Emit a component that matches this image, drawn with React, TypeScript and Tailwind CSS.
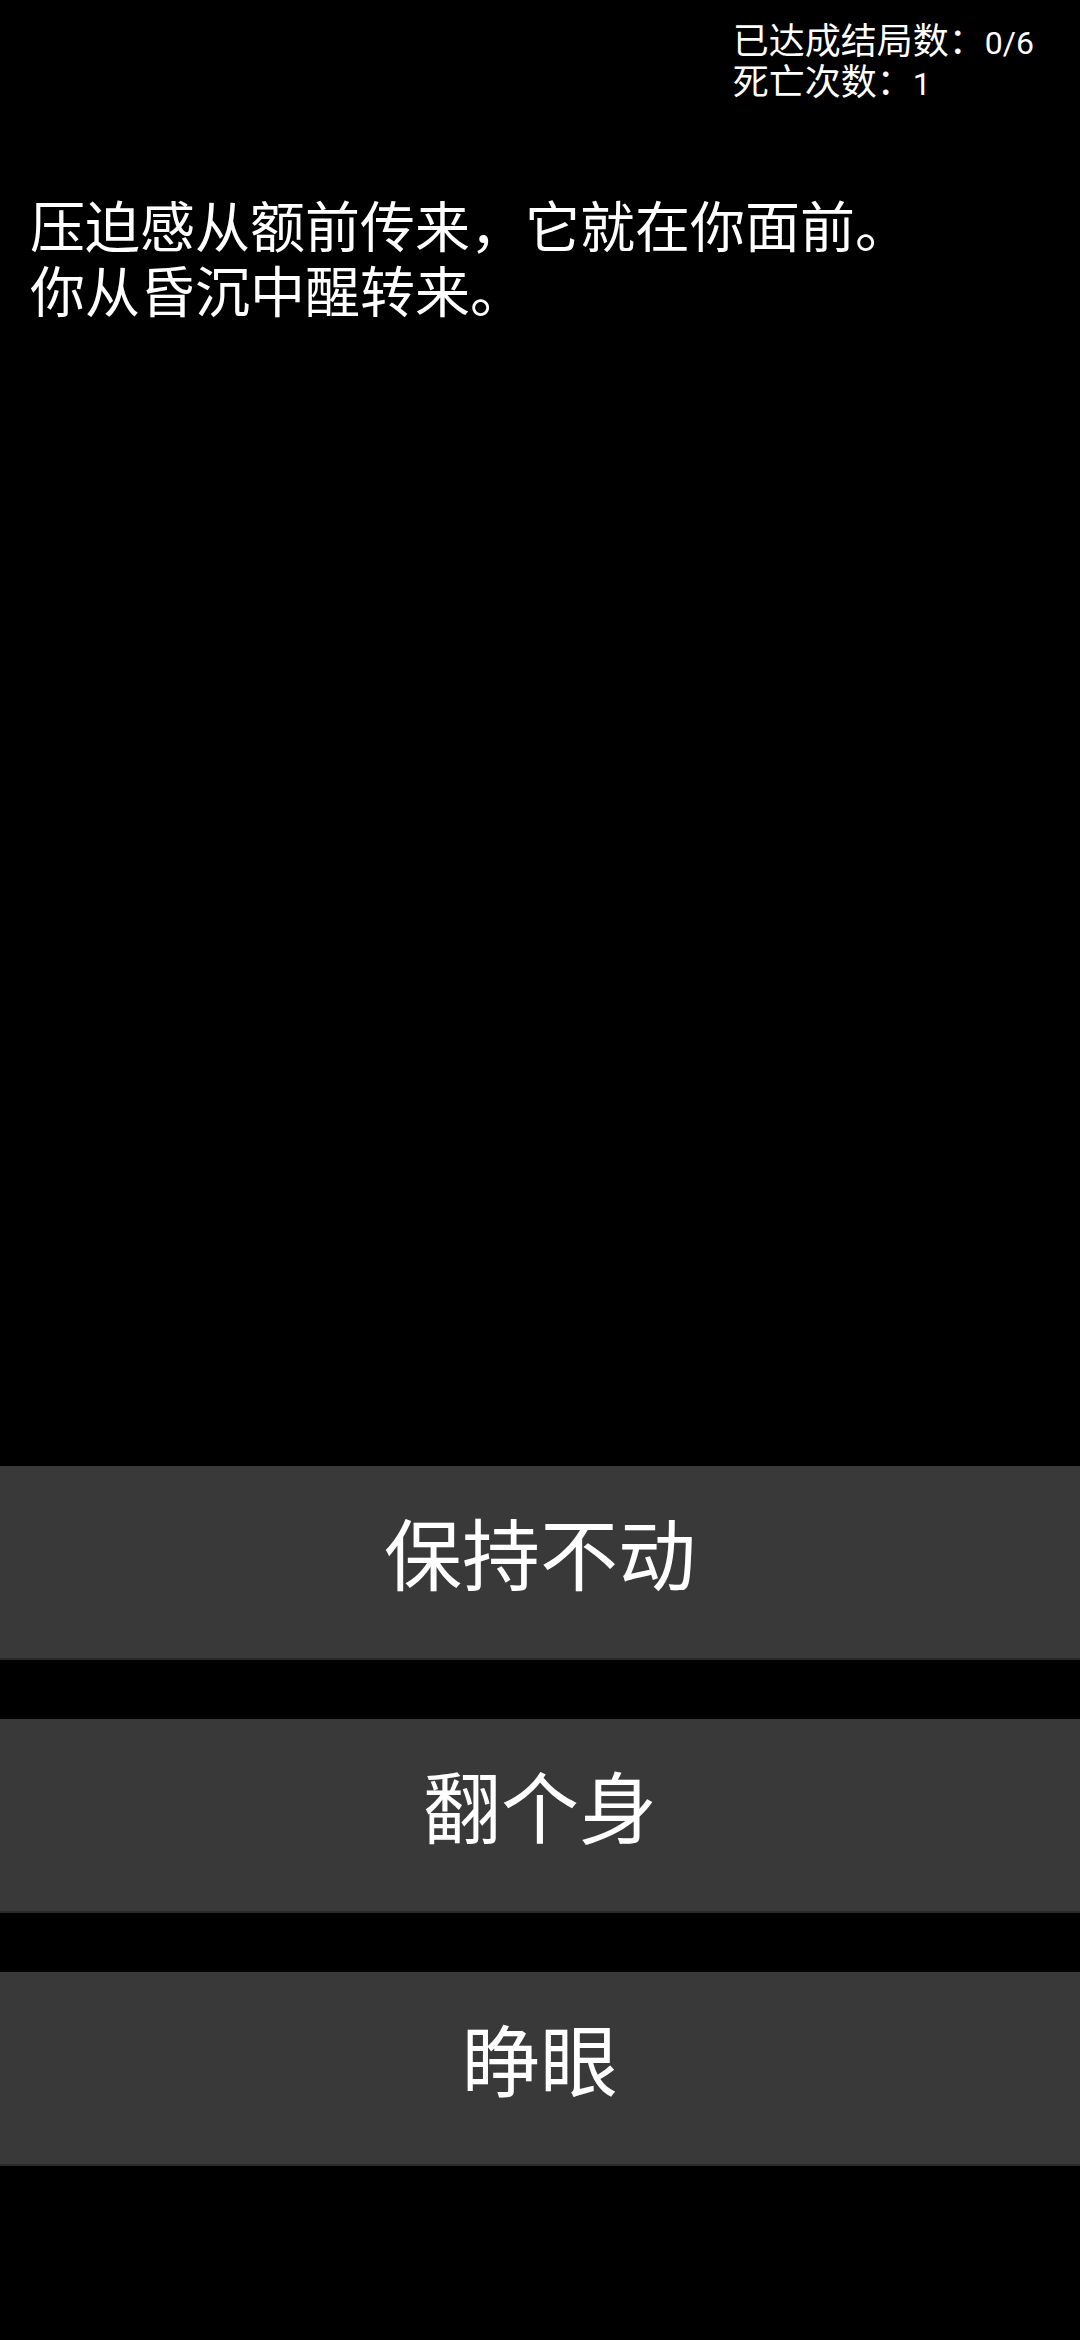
const font = { fontFamily: '"Noto Sans CJK SC", Roboto, sans-serif' };

const choices = ["保持不动", "翻个身", "睁眼"];

export default function App() {
  return (
    <div className="flex h-[2340px] w-[1080px] flex-col bg-black text-white" style={font}>
      <div className="flex justify-end pr-[46px] pt-[18px]">
        <div className="text-[36px] leading-[40px]">
          <div>
            已达成结局数：<span className="font-[Roboto] text-[32px] leading-none">0/6</span>
          </div>
          <div>
            死亡次数：<span className="font-[Roboto] text-[32px] leading-none">1</span>
          </div>
        </div>
      </div>

      <div className="mt-[91px] px-[30px] text-[55px] leading-[65px]">
        <div>压迫感从额前传来，它就在你面前。</div>
        <div>你从昏沉中醒转来。</div>
      </div>

      <div className="mt-auto flex flex-col gap-[59px] pb-[174px]">
        {choices.map((c) => (
          <button
            key={c}
            className="flex h-[194px] w-full items-center justify-center border-b-2 border-[#2a2a2a] bg-[#393939] pb-[23px] text-[78px] leading-none text-white"
          >
            {c}
          </button>
        ))}
      </div>
    </div>
  );
}
